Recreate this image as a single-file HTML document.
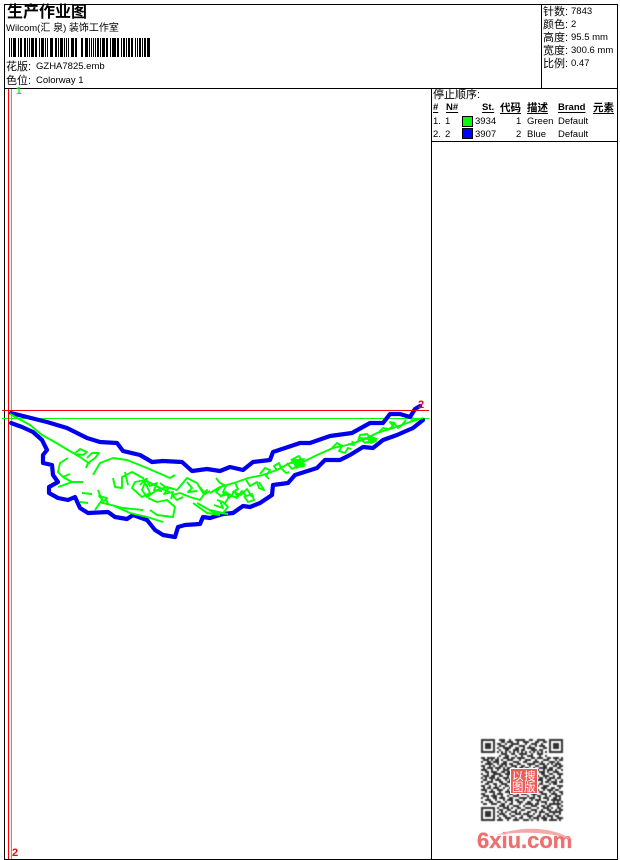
<!DOCTYPE html>
<html lang="zh-CN">
<head>
<meta charset="utf-8">
<title>生产作业图</title>
<style>
html,body{margin:0;padding:0;background:#fff;}
#p{position:relative;width:620px;height:860px;overflow:hidden;background:#fff;color:#000;font-family:"Liberation Sans","WenQuanYi Zen Hei","Noto Sans CJK SC",sans-serif;font-size:9.5px;}
.t{position:absolute;white-space:pre;line-height:12px;height:12px;}
.c{font-size:11px;}
.b{font-weight:bold;text-decoration:underline;text-underline-offset:1.5px;}
.l{position:absolute;background:#000;}
svg{position:absolute;left:0;top:0;}
</style>
</head>
<body>
<div id="p">
<div class="l" style="left:4px;top:4px;width:613px;height:1px"></div>
<div class="l" style="left:4px;top:88px;width:613px;height:1px"></div>
<div class="l" style="left:4px;top:859px;width:613px;height:1px"></div>
<div class="l" style="left:4px;top:4px;width:1px;height:856px"></div>
<div class="l" style="left:617px;top:4px;width:1px;height:856px"></div>
<div class="l" style="left:541px;top:4px;width:1px;height:85px"></div>
<div class="l" style="left:431px;top:88px;width:1px;height:772px"></div>
<div class="l" style="left:431px;top:141px;width:186px;height:1px"></div>

<div class="t" style="left:7px;top:4px;font-size:16px;font-weight:bold;line-height:17px;height:17px">生产作业图</div>
<div class="t" style="left:6px;top:23px"><span>Wilcom(</span><span class="c" style="font-size:10px">汇 泉</span><span>) </span><span class="c" style="font-size:10px">装饰工作室</span></div>
<svg width="620" height="860"><path fill="#000" shape-rendering="crispEdges" d="M9 38h1v19h-1zM11 38h1v19h-1zM13 38h3v19h-3zM18 38h1v19h-1zM20 38h2v19h-2zM24 38h2v19h-2zM27 38h1v19h-1zM29 38h1v19h-1zM31 38h3v19h-3zM35 38h2v19h-2zM39 38h1v19h-1zM41 38h3v19h-3zM45 38h1v19h-1zM47 38h1v19h-1zM50 38h3v19h-3zM55 38h2v19h-2zM58 38h1v19h-1zM60 38h3v19h-3zM64 38h1v19h-1zM66 38h1v19h-1zM68 38h1v19h-1zM71 38h3v19h-3zM75 38h2v19h-2zM81 38h2v19h-2zM85 38h3v19h-3zM89 38h1v19h-1zM91 38h1v19h-1zM93 38h1v19h-1zM95 38h1v19h-1zM97 38h2v19h-2zM100 38h1v19h-1zM102 38h3v19h-3zM106 38h2v19h-2zM110 38h1v19h-1zM112 38h4v19h-4zM117 38h2v19h-2zM121 38h1v19h-1zM123 38h2v19h-2zM126 38h1v19h-1zM128 38h2v19h-2zM131 38h2v19h-2zM135 38h1v19h-1zM137 38h1v19h-1zM139 38h2v19h-2zM142 38h1v19h-1zM144 38h2v19h-2zM147 38h3v19h-3z"/></svg>
<div class="t" style="left:6px;top:61px"><span class="c">花版:</span></div>
<div class="t" style="left:36px;top:61px">GZHA7825.emb</div>
<div class="t" style="left:6px;top:75px"><span class="c">色位:</span></div>
<div class="t" style="left:36px;top:75px">Colorway 1</div>

<div class="t c" style="left:543px;top:6px">针数:</div><div class="t" style="left:571px;top:6px">7843</div>
<div class="t c" style="left:543px;top:19px">颜色:</div><div class="t" style="left:571px;top:19px">2</div>
<div class="t c" style="left:543px;top:32px">高度:</div><div class="t" style="left:571px;top:32px">95.5 mm</div>
<div class="t c" style="left:543px;top:45px">宽度:</div><div class="t" style="left:571px;top:45px">300.6 mm</div>
<div class="t c" style="left:543px;top:58px">比例:</div><div class="t" style="left:571px;top:58px">0.47</div>

<div class="t c" style="left:433px;top:89px">停止顺序:</div>
<div class="t b" style="left:433px;top:102px">#</div>
<div class="t b" style="left:446px;top:102px">N#</div>
<div class="t b" style="left:482px;top:102px">St.</div>
<div class="t b c" style="left:500px;top:102px;font-size:10.5px">代码</div>
<div class="t b c" style="left:527px;top:102px;font-size:10.5px">描述</div>
<div class="t b" style="left:558px;top:102px">Brand</div>
<div class="t b c" style="left:593px;top:102px;font-size:10.5px">元素</div>

<div class="t" style="left:433px;top:116px">1.</div><div class="t" style="left:445px;top:116px">1</div>
<div style="position:absolute;left:462px;top:116px;width:9px;height:9px;background:#00ff00;border:1px solid #000"></div>
<div class="t" style="left:475px;top:116px">3934</div><div class="t" style="left:516px;top:116px">1</div>
<div class="t" style="left:527px;top:116px">Green</div><div class="t" style="left:558px;top:116px">Default</div>

<div class="t" style="left:433px;top:129px">2.</div><div class="t" style="left:445px;top:129px">2</div>
<div style="position:absolute;left:462px;top:128px;width:9px;height:9px;background:#0000ff;border:1px solid #000"></div>
<div class="t" style="left:475px;top:129px">3907</div><div class="t" style="left:516px;top:129px">2</div>
<div class="t" style="left:527px;top:129px">Blue</div><div class="t" style="left:558px;top:129px">Default</div>

<svg width="620" height="860">
<rect x="11" y="89" width="1" height="770" fill="#00ff00"/>
<rect x="2" y="418" width="427" height="1" fill="#00ff00"/>
<path fill="none" stroke="#0000ee" stroke-width="4.2" stroke-linejoin="round" stroke-linecap="round" d="M11 413L27 417 47 422 67 428 87 438 100 442 117 443 123 451 140 455 152 462 163 461 182 462 192 471 207 469 220 471 230 467 243 470 253 462 270 460 273 452 300 443 310 443 330 436 352 433 370 423 383 423 390 414 400 414 410 417 415 409 420 406M423 420L413 428 397 435 383 440 373 448 363 447 350 455 340 460 325 460 317 468 295 475 288 483 273 485 272 495 260 503 250 507 243 506 233 513 223 514 210 518 203 517 200 524 185 525 178 527 175 537 163 535 155 530 147 520 133 515 127 519 115 517 108 512 88 513 80 508 75 497 68 500 58 498 49 493 49 487 58 482 53 475 52 465 43 463 43 455 47 450 42 440 33 432 22 427 11 423"/>
<g fill="none" stroke="#00ff00" stroke-width="1.9" stroke-linejoin="round">
<path d="M10 414L30 425 42 435 53 441 68 450 80 457 90 464M75 453L80 449 87 452 83 455 77 454M87 458L92 453 99 453 95 458 88 463 86 468M68 458L60 463 58 472 63 477 70 474M63 477L72 482 83 482M72 482L58 487M93 475L100 463 113 458 127 460 147 468 170 478 175 475M113 478L115 487 122 488 122 477 132 472 143 478 150 493 142 497 132 488 135 482 145 480 160 488 170 492M125 472L128 485M147 478L142 490 147 497 157 490 167 487 177 490 187 478 197 483 203 493 207 490 200 500 190 497 180 493 172 495 177 500 183 497M82 493L92 494M80 502L88 503M98 490L102 500 95 510M103 503L123 508 143 510M112 505L130 513 147 517 163 522M150 510L157 515 173 517 175 507 167 500 157 502 148 498M193 503L207 513 220 515M197 503L213 512 228 514M210 493L220 487 237 482 248 478 263 475 277 470 290 463 303 462 317 455 333 448 347 445 363 440 377 433 393 428 410 422 423 418"/>
<path d="M103 500l-4-4 8 2-5 5 6 1-2-5M140 485l6-6 4 7 7-3-3 7 8 1M160 483l8 6-4 5 9-2-2 7M187 482l5 6-4 4 9-1M200 487l5 7 5-3M210 510l13 3 5-6-5-5-6-2M214 505l9 3-3-7M216 478l4 5 6 3-3 6 6 2-8 2-5-4 6-6M220 497l6-5 3 6 6-7 2 6 5-6M225 503l5-8 7 3 5-7 4 5 6-2 2 6-6 2-4-6M235 483l3 6-5 3 8 3 6-6 5 8M246 480l4 6 7-4 2 6 5 2-5-8M260 474l5-6 5 2-4 6 3 3M277 470l-3-4 5-3 2 5 5 5 3-1M287 463l5 6 6-3 5-3-4-7-6 3 3 8 5-5-7-3 3 6 6-1-3-5 4 7-7 1-5-6 7-1-2 6 8-2M291 459l6 9 7-9-9 2 8 4M332 448l5-5 5 3-3 5 6 2 3-5 3 1M348 444l6 1-2-4M358 441l2-6 7-1 5 6-7 3-5-5 8 1 3 4 5-2-5-4 6 2M378 433l5-5 6 1 4-3-3-4 5 1M392 428l2-5 4 5 4-3 4-5M365 438l8 3-6 2M411 421l2-3 3 2"/>
</g>
<rect x="2" y="410" width="427" height="1" fill="#ff0000"/>
<rect x="8" y="89" width="1" height="770" fill="#ff0000"/>
</svg>
<div class="t" style="left:16px;top:86px;color:#00ff00;font-weight:bold;font-size:10px">1</div>
<div class="t" style="left:12px;top:847px;color:#ff0000;font-size:11px;font-weight:bold">2</div>
<div class="t" style="left:418px;top:399px;color:#ff0000;font-size:11px;font-weight:bold">2</div>

<svg width="620" height="860">
<defs><filter id="q" x="-5%" y="-5%" width="110%" height="110%"><feGaussianBlur stdDeviation="0.3"/></filter></defs>
<g filter="url(#q)" transform="translate(481 739) scale(2)" fill="none" stroke="#333" stroke-width="1" shape-rendering="crispEdges">
<path d="M.5 0v7M6.5 0v7M0 .5h7M0 6.5h7M34.5 0v7M40.5 0v7M34 .5h7M34 6.5h7M.5 34v7M6.5 34v7M0 34.5h7M0 40.5h7"/>
<path stroke-width="3" d="M2 3.5h3M36 3.5h3M2 37.5h3"/>
<path d="M9 .5h3M14 .5h1M17 .5h5M24 .5h2M28 .5h4M10 1.5h2M13 1.5h3M18 1.5h1M21 1.5h3M27 1.5h2M31 1.5h2M8 2.5h2M12 2.5h1M15 2.5h4M22 2.5h1M25 2.5h3M30 2.5h1M9 3.5h3M14 3.5h2M19 3.5h3M24 3.5h1M27 3.5h1M29 3.5h3M8 4.5h1M11 4.5h4M17 4.5h2M21 4.5h1M23 4.5h4M31 4.5h2M9 5.5h1M12 5.5h2M16 5.5h3M20 5.5h2M25 5.5h3M29 5.5h2M8 6.5h1M10 6.5h1M12 6.5h1M14 6.5h1M16 6.5h1M18 6.5h1M20 6.5h1M22 6.5h1M24 6.5h1M26 6.5h1M28 6.5h1M30 6.5h1M32 6.5h1M10 7.5h3M15 7.5h2M19 7.5h4M25 7.5h1M28 7.5h3M9 8.5h1M12 8.5h2M17 8.5h1M20 8.5h1M23 8.5h3M29 8.5h1M32 8.5h1M0 9.5h2M3 9.5h4M8 9.5h1M11 9.5h3M15 9.5h2M18 9.5h4M25 9.5h2M28 9.5h3M33 9.5h2M36 9.5h3M40 9.5h1M1 10.5h3M5 10.5h1M7 10.5h2M10 10.5h1M13 10.5h3M19 10.5h1M22 10.5h3M27 10.5h1M31 10.5h3M37 10.5h1M39 10.5h2M0 11.5h1M3 11.5h2M6 11.5h3M11 11.5h2M16 11.5h3M21 11.5h2M26 11.5h3M30 11.5h1M34 11.5h3M38 11.5h1M2 12.5h4M8 12.5h1M10 12.5h3M14 12.5h2M18 12.5h2M23 12.5h4M29 12.5h3M33 12.5h1M35 12.5h1M37 12.5h3M0 13.5h2M4 13.5h1M6 13.5h1M9 13.5h2M12 13.5h1M15 13.5h3M20 13.5h2M24 13.5h1M27 13.5h2M31 13.5h2M36 13.5h2M39 13.5h2M1 14.5h1M3 14.5h3M7 14.5h3M11 14.5h1M13 14.5h2M17 14.5h1M19 14.5h2M22 14.5h2M26 14.5h1M29 14.5h4M34 14.5h2M38 14.5h2M0 15.5h3M5 15.5h1M8 15.5h1M11 15.5h3M16 15.5h2M27 15.5h2M31 15.5h1M33 15.5h3M37 15.5h1M40 15.5h1M2 16.5h2M5 16.5h3M10 16.5h2M13 16.5h2M29 16.5h3M33 16.5h1M36 16.5h3M0 17.5h1M3 17.5h1M6 17.5h4M12 17.5h4M30 17.5h2M34 17.5h2M38 17.5h3M1 18.5h3M5 18.5h2M9 18.5h2M13 18.5h1M15 18.5h1M28 18.5h1M31 18.5h3M36 18.5h1M39 18.5h1M0 19.5h1M2 19.5h1M4 19.5h3M8 19.5h1M11 19.5h3M29 19.5h2M32 19.5h1M34 19.5h3M38 19.5h2M1 20.5h2M5 20.5h1M7 20.5h3M12 20.5h1M14 20.5h1M28 20.5h3M33 20.5h2M37 20.5h1M40 20.5h1M0 21.5h1M3 21.5h3M9 21.5h2M13 21.5h2M30 21.5h1M32 21.5h2M35 21.5h3M39 21.5h2M2 22.5h2M6 22.5h2M10 22.5h3M15 22.5h1M29 22.5h2M34 22.5h1M36 22.5h2M0 23.5h2M4 23.5h1M7 23.5h1M9 23.5h1M12 23.5h2M28 23.5h1M31 23.5h3M38 23.5h3M1 24.5h1M3 24.5h2M6 24.5h3M11 24.5h1M14 24.5h2M30 24.5h3M35 24.5h2M39 24.5h1M0 25.5h3M5 25.5h1M8 25.5h3M13 25.5h1M16 25.5h2M27 25.5h2M31 25.5h1M33 25.5h3M37 25.5h2M2 26.5h1M4 26.5h3M9 26.5h1M12 26.5h3M17 26.5h3M22 26.5h2M26 26.5h1M29 26.5h2M34 26.5h1M36 26.5h1M39 26.5h2M0 27.5h2M6 27.5h1M8 27.5h3M14 27.5h2M18 27.5h1M20 27.5h3M25 27.5h3M30 27.5h3M35 27.5h3M40 27.5h1M1 28.5h3M5 28.5h3M10 28.5h1M13 28.5h1M16 28.5h3M23 28.5h1M26 28.5h1M28 28.5h2M32 28.5h1M34 28.5h1M37 28.5h3M0 29.5h1M3 29.5h1M6 29.5h2M9 29.5h3M14 29.5h2M19 29.5h4M24 29.5h3M29 29.5h1M31 29.5h3M36 29.5h2M39 29.5h1M2 30.5h3M7 30.5h1M11 30.5h1M13 30.5h3M17 30.5h2M21 30.5h1M25 30.5h1M27 30.5h3M33 30.5h1M35 30.5h5M0 31.5h1M4 31.5h2M8 31.5h2M12 31.5h1M15 31.5h1M18 31.5h3M23 31.5h2M28 31.5h1M30 31.5h3M36 31.5h1M38 31.5h1M40 31.5h1M1 32.5h2M5 32.5h3M10 32.5h2M14 32.5h2M19 32.5h1M22 32.5h4M27 32.5h2M32 32.5h1M34 32.5h6M9 33.5h3M13 33.5h1M16 33.5h3M21 33.5h1M25 33.5h3M30 33.5h2M33 33.5h2M38 33.5h1M40 33.5h1M8 34.5h1M11 34.5h3M15 34.5h1M18 34.5h2M22 34.5h3M28 34.5h1M31 34.5h3M35 34.5h1M38 34.5h2M9 35.5h2M13 35.5h2M17 35.5h1M20 35.5h2M25 35.5h3M30 35.5h1M33 35.5h2M37 35.5h1M39 35.5h2M8 36.5h1M10 36.5h1M12 36.5h1M15 36.5h3M19 36.5h1M23 36.5h2M27 36.5h1M29 36.5h3M34 36.5h6M9 37.5h3M14 37.5h1M17 37.5h3M21 37.5h3M26 37.5h1M29 37.5h1M32 37.5h2M36 37.5h1M39 37.5h1M8 38.5h1M11 38.5h2M15 38.5h2M20 38.5h1M23 38.5h3M28 38.5h2M31 38.5h1M33 38.5h3M37 38.5h2M9 39.5h1M12 39.5h3M17 39.5h1M19 39.5h2M24 39.5h1M26 39.5h3M30 39.5h3M35 39.5h1M38 39.5h3M8 40.5h3M13 40.5h1M16 40.5h3M21 40.5h3M25 40.5h1M28 40.5h1M31 40.5h2M34 40.5h4M39 40.5h1"/>
</g>
<rect x="510" y="768" width="28" height="26" fill="#fff"/>
<rect x="511" y="769" width="26" height="24" fill="#f25a5a"/>
<text x="512" y="780" font-size="11.5" fill="#fff" font-family="'Liberation Sans','WenQuanYi Zen Hei',sans-serif">以</text>
<text x="524" y="780" font-size="11.5" fill="#fff" font-family="'Liberation Sans','WenQuanYi Zen Hei',sans-serif">搜</text>
<text x="512" y="791" font-size="11.5" fill="#fff" font-family="'Liberation Sans','WenQuanYi Zen Hei',sans-serif">图</text>
<text x="524" y="791" font-size="11.5" fill="#fff" font-family="'Liberation Sans','WenQuanYi Zen Hei',sans-serif">版</text>
<text x="477" y="848" font-size="22" font-weight="bold" fill="#ef6f6f" stroke="#ef6f6f" stroke-width=".3" font-family="'Liberation Sans',sans-serif">6xiu.com</text>
<path d="M497 835C520 826 552 826 573 840C552 832 522 831 497 835Z" fill="#f4a8a8"/>
</svg>
</div>
</body>
</html>
